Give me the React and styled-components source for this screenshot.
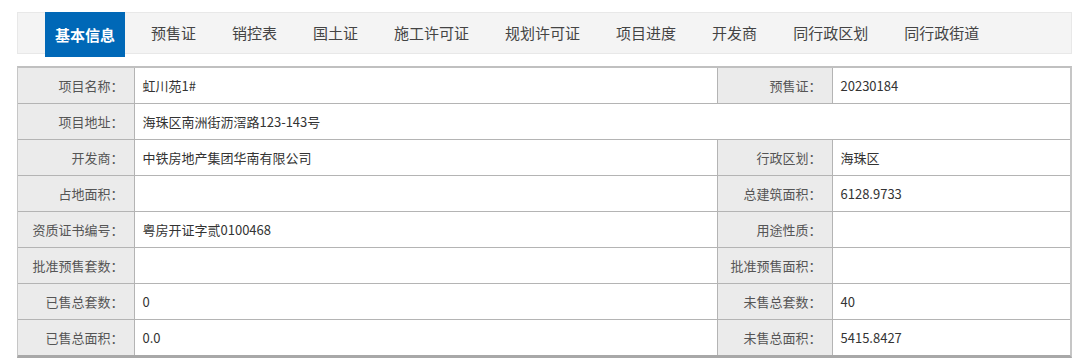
import styled, { createGlobalStyle } from 'styled-components';

const tabs = ['基本信息', '预售证', '销控表', '国土证', '施工许可证', '规划许可证', '项目进度', '开发商', '同行政区划', '同行政街道'];

const rows = [
  [['项目名称：', '虹川苑1#'], ['预售证：', '20230184']],
  [['项目地址：', '海珠区南洲街沥滘路123-143号']],
  [['开发商：', '中铁房地产集团华南有限公司'], ['行政区划：', '海珠区']],
  [['占地面积：', ''], ['总建筑面积：', '6128.9733']],
  [['资质证书编号：', '粤房开证字贰0100468'], ['用途性质：', '']],
  [['批准预售套数：', ''], ['批准预售面积：', '']],
  [['已售总套数：', '0'], ['未售总套数：', '40']],
  [['已售总面积：', '0.0'], ['未售总面积：', '5415.8427']],
];

function App() {
  return (
    <>
      <GlobalStyle />
      <Page>
        <TabBar>
          {tabs.map((t, i) => (
            <Tab key={t} active={i === 0}>{t}</Tab>
          ))}
        </TabBar>
        <TableWrap>
          <InfoTable>
            <colgroup>
              <col style={{ width: 116 }} />
              <col style={{ width: 583 }} />
              <col style={{ width: 115 }} />
              <col />
            </colgroup>
            <tbody>
              {rows.map((row, i) => (
                <tr key={i}>
                  {row.map(([label, value]) => (
                    <Field key={label} label={label} value={value} wide={row.length === 1} />
                  ))}
                </tr>
              ))}
            </tbody>
          </InfoTable>
        </TableWrap>
      </Page>
    </>
  );
}

function Field({ label, value, wide }) {
  return (
    <>
      <Label>{label}</Label>
      <Value colSpan={wide ? 3 : 1}>{value}</Value>
    </>
  );
}

const GlobalStyle = createGlobalStyle`
  body {
    margin: 0;
    background: #fff;
    font-family: "Noto Sans CJK SC", "Liberation Sans", sans-serif;
    color: #333;
  }
`;

const Page = styled.div`
  padding: 12px 8px 0 17px;
  width: 1055px;
`;

const TabBar = styled.div`
  display: flex;
  gap: 16px;
  height: 42px;
  padding-left: 27px;
  background: #f4f4f4;
  border: 1px solid #e8e8e8;
  box-sizing: border-box;
`;

const Tab = styled.div`
  height: ${p => (p.active ? '45px' : '40px')};
  margin-top: -1px;
  padding: 0 10px;
  display: flex;
  align-items: center;
  font-size: 15px;
  white-space: nowrap;
  color: ${p => (p.active ? '#fff' : '#444')};
  font-weight: ${p => (p.active ? 700 : 400)};
  background: ${p => (p.active ? '#0068b7' : 'transparent')};
  position: relative;
  z-index: 1;
`;

const TableWrap = styled.div`
  margin-top: 12px;
  border: 1px solid #c6c6c6;
  border-top: 2px solid #c0c0c0;
  border-bottom: 3px solid #a8a8a8;
  border-right: 2px solid #c6c6c6;
`;

const InfoTable = styled.table`
  width: 100%;
  border-collapse: collapse;
  table-layout: fixed;
  font-size: 13px;

  tr:first-child td { border-top: none; }
  tr:last-child td { border-bottom: none; }
  td:first-child { border-left: none; }
  td:last-child { border-right: none; }
`;

const Label = styled.td`
  height: 35px;
  padding: 0 10px 0 0;
  text-align: right;
  background: #ebebeb;
  border: 1px solid #b4b4b4;
  color: #555;
  white-space: nowrap;
`;

const Value = styled.td`
  height: 35px;
  padding: 0 0 0 8px;
  border: 1px solid #b4b4b4;
  color: #333;
  white-space: nowrap;
`;

export { App as default };
